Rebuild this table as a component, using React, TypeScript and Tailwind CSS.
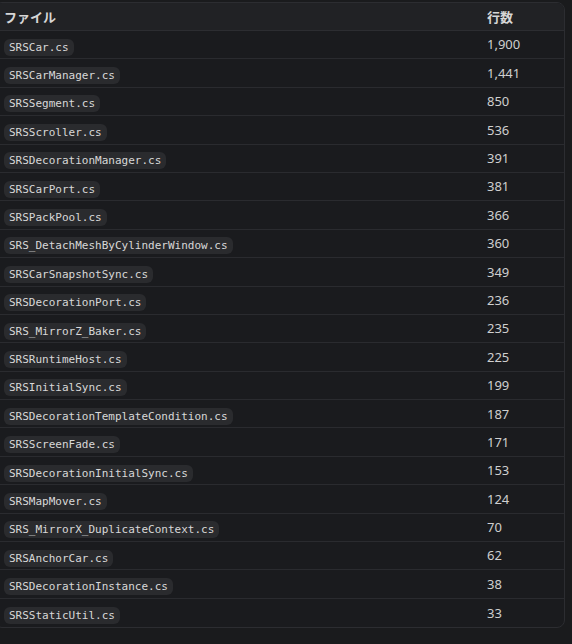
const rows: [string, string][] = [
  ["SRSCar.cs", "1,900"],
  ["SRSCarManager.cs", "1,441"],
  ["SRSSegment.cs", "850"],
  ["SRSScroller.cs", "536"],
  ["SRSDecorationManager.cs", "391"],
  ["SRSCarPort.cs", "381"],
  ["SRSPackPool.cs", "366"],
  ["SRS_DetachMeshByCylinderWindow.cs", "360"],
  ["SRSCarSnapshotSync.cs", "349"],
  ["SRSDecorationPort.cs", "236"],
  ["SRS_MirrorZ_Baker.cs", "235"],
  ["SRSRuntimeHost.cs", "225"],
  ["SRSInitialSync.cs", "199"],
  ["SRSDecorationTemplateCondition.cs", "187"],
  ["SRSScreenFade.cs", "171"],
  ["SRSDecorationInitialSync.cs", "153"],
  ["SRSMapMover.cs", "124"],
  ["SRS_MirrorX_DuplicateContext.cs", "70"],
  ["SRSAnchorCar.cs", "62"],
  ["SRSDecorationInstance.cs", "38"],
  ["SRSStaticUtil.cs", "33"],
]

export default function App() {
  return (
    <div className="w-[572px] h-[644px] bg-[#1a1b1d] pt-[2px] overflow-hidden">
      <div
        className="ml-[-6px] w-[571px] rounded-lg border border-[#2c2d31] bg-[#1a1b1e] overflow-hidden"
        style={{ fontFamily: '"Noto Sans", "Noto Sans CJK JP", sans-serif' }}
      >
        <div className="flex h-[28px] items-center bg-[#212225] border-b border-[#2c2d31] text-[13px] font-bold text-[#d6d6d6]">
          <div className="flex-1 pl-[9px]" style={{ fontFamily: '"Noto Sans CJK JP", sans-serif' }}>ファイル</div>
          <div className="w-[77px]" style={{ fontFamily: '"Noto Sans CJK JP", sans-serif' }}>行数</div>
        </div>
        {rows.map(([file, lines], i) => (
          <div
            key={file}
            className={`flex h-[28.4px] items-center ${i < rows.length - 1 ? "border-b border-[#2a2b2f]" : ""}`}
          >
            <div className="flex-1 pl-[9px]">
              <span
                className="inline-block rounded-[6px] bg-[#2a2b2e] px-[5px] leading-[17px] text-[11px] text-[#d8d8d8]"
                style={{ fontFamily: '"DejaVu Sans Mono", monospace' }}
              >
                {file}
              </span>
            </div>
            <div className="w-[77px] pt-px text-[13px] text-[#cfcfcf]">{lines}</div>
          </div>
        ))}
      </div>
    </div>
  )
}
